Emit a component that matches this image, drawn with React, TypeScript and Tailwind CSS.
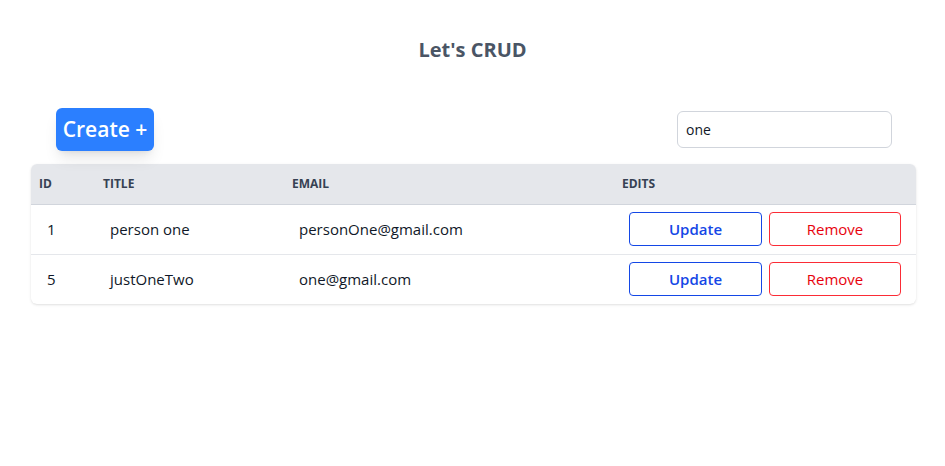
import { useState } from "react";

const people = [
  { id: 1, title: "person one", email: "personOne@gmail.com" },
  { id: 5, title: "justOneTwo", email: "one@gmail.com" },
];

export default function App() {
  const [query, setQuery] = useState("one");

  return (
    <div className="min-h-screen bg-white font-['Open_Sans',sans-serif] text-gray-900">
      <h1 className="pt-[36px] text-center text-[20px] font-bold leading-[28px] text-gray-600">Let's CRUD</h1>

      <div className="mt-[44px] pl-[31px] pr-[29px]">
        <div className="flex items-end justify-between pl-[25px] pr-[24px]">
          <button className="h-[43px] w-[98px] rounded-md bg-blue-500 text-[21px] font-semibold text-white shadow-lg">
            Create +
          </button>
          <input
            value={query}
            onChange={(e) => setQuery(e.target.value)}
            className="mb-[3px] h-[37px] w-[215px] rounded-md border border-gray-300 px-2 text-[14px] text-gray-900 outline-none"
          />
        </div>

        <div className="mt-[13px] overflow-hidden rounded-md shadow">
          <table className="w-full table-fixed border-collapse text-left">
            <colgroup>
              <col className="w-[64px]" />
              <col className="w-[189px]" />
              <col className="w-[330px]" />
              <col />
            </colgroup>
            <thead className="border-b border-gray-300 bg-gray-200">
              <tr className="h-[40px] text-[12px] font-bold uppercase text-gray-700">
                <th className="px-2">ID</th>
                <th className="px-2">Title</th>
                <th className="px-2">Email</th>
                <th className="px-2">Edits</th>
              </tr>
            </thead>
            <tbody>
              {people.map((p) => (
                <tr key={p.id} className="h-[50px] border-b border-gray-200 text-[15px] last:border-b-0">
                  <td className="px-4">{p.id}</td>
                  <td className="pl-[15px] pr-4">{p.title}</td>
                  <td className="pl-[15px] pr-4">{p.email}</td>
                  <td className="px-[15px]">
                    <div className="flex gap-[7px]">
                      <button className="h-[34px] w-[133px] rounded border border-blue-700 text-[15px] font-semibold text-blue-700">
                        Update
                      </button>
                      <button className="h-[34px] w-[132px] rounded border border-red-500 text-[15px] text-red-600">
                        Remove
                      </button>
                    </div>
                  </td>
                </tr>
              ))}
            </tbody>
          </table>
        </div>
      </div>
    </div>
  );
}
